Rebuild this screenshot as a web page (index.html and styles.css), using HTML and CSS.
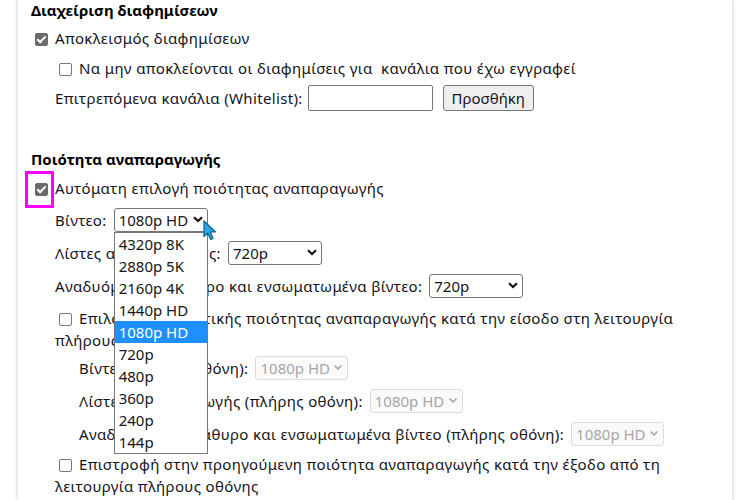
FILE: index.html
```html
<!DOCTYPE html>
<html lang="el">
<head>
    <meta charset="UTF-8">
    <meta name="viewport" content="width=device-width, initial-scale=1.0">
    <title>Ρυθμίσεις</title>
    <link rel="stylesheet" href="styles.css">
</head>
<body>
    <div class="panel">
        <h2 class="title">Διαχείριση διαφημίσεων</h2>
        <div class="line">
            <label><input type="checkbox" checked>Αποκλεισμός διαφημίσεων</label>
        </div>
        <div class="line sub">
            <label><input type="checkbox">Να μην αποκλείονται οι διαφημίσεις για&nbsp; κανάλια που έχω εγγραφεί</label>
        </div>
        <div class="line sub">
            <span>Επιτρεπόμενα κανάλια (Whitelist):</span>
            <input type="text" class="text-input">
            <button class="btn">Προσθήκη</button>
        </div>

        <h2 class="title second">Ποιότητα αναπαραγωγής</h2>
        <div class="line tight marked">
            <label><input type="checkbox" checked>Αυτόματη επιλογή ποιότητας αναπαραγωγής</label>
            <span class="mark"></span>
        </div>
        <div class="field">
            <span>Βίντεο:</span>
            <span class="sel">
                <select><option>1080p HD</option></select>
                <svg class="chev" width="10" height="7" viewBox="0 0 10 7"><path d="M1 1.2 5 5 9 1.2" fill="none" stroke="#111" stroke-width="2.2"/></svg>
                <div class="menu">
                    <div>4320p 8K</div>
                    <div>2880p 5K</div>
                    <div>2160p 4K</div>
                    <div>1440p HD</div>
                    <div class="on">1080p HD</div>
                    <div>720p</div>
                    <div>480p</div>
                    <div>360p</div>
                    <div>240p</div>
                    <div>144p</div>
                </div>
                <svg class="cursor" width="15" height="21" viewBox="0 0 15 21"><path d="M1 1 1 16.5 4.8 13 7.6 19.5 10 18.4 7.3 12 12.5 12Z" fill="#2aa8e6" stroke="#0b5f93" stroke-width="1.2" stroke-linejoin="round"/></svg>
            </span>
        </div>
        <div class="field">
            <span>Λίστες αναπαραγωγής:</span>
            <span class="sel">
                <select><option>720p</option></select>
                <svg class="chev" width="10" height="7" viewBox="0 0 10 7"><path d="M1 1.2 5 5 9 1.2" fill="none" stroke="#111" stroke-width="2.2"/></svg>
            </span>
        </div>
        <div class="field">
            <span>Αναδυόμενο παράθυρο και ενσωματωμένα βίντεο:</span>
            <span class="sel">
                <select><option>720p</option></select>
                <svg class="chev" width="10" height="7" viewBox="0 0 10 7"><path d="M1 1.2 5 5 9 1.2" fill="none" stroke="#111" stroke-width="2.2"/></svg>
            </span>
        </div>
        <div class="wrap">
            <label><input type="checkbox">Επιλογή διαφορετικής ποιότητας αναπαραγωγής κατά την είσοδο στη λειτουργία πλήρους οθόνης</label>
        </div>
        <div class="field deep">
            <span>Βίντεο (πλήρης οθόνη):</span>
            <span class="sel off">
                <select disabled><option>1080p HD</option></select>
                <svg class="chev" width="10" height="7" viewBox="0 0 10 7"><path d="M1.5 1.5 5 4.8 8.5 1.5" fill="none" stroke="#a6a6a6" stroke-width="1.6"/></svg>
            </span>
        </div>
        <div class="field deep">
            <span>Λίστες αναπαραγωγής (πλήρης οθόνη):</span>
            <span class="sel off">
                <select disabled><option>1080p HD</option></select>
                <svg class="chev" width="10" height="7" viewBox="0 0 10 7"><path d="M1.5 1.5 5 4.8 8.5 1.5" fill="none" stroke="#a6a6a6" stroke-width="1.6"/></svg>
            </span>
        </div>
        <div class="field deep">
            <span>Αναδυόμενο παράθυρο και ενσωματωμένα βίντεο (πλήρης οθόνη):</span>
            <span class="sel off">
                <select disabled><option>1080p HD</option></select>
                <svg class="chev" width="10" height="7" viewBox="0 0 10 7"><path d="M1.5 1.5 5 4.8 8.5 1.5" fill="none" stroke="#a6a6a6" stroke-width="1.6"/></svg>
            </span>
        </div>
        <div class="wrap last">
            <label><input type="checkbox">Επιστροφή στην προηγούμενη ποιότητα αναπαραγωγής κατά την έξοδο από τη λειτουργία πλήρους οθόνης</label>
        </div>
    </div>
</body>
</html>
```

FILE: styles.css
```css
body {
    margin: 0;
    font-family: "Noto Sans", "Open Sans", sans-serif;
    font-size: 15px;
    letter-spacing: 0.35px;
    color: #141420;
    background: #fff;
    overflow: hidden;
}
.panel {
    margin-left: 18px;
    width: 701px;
    padding-left: 13px;
    height: 500px;
    background: #fff;
    box-shadow: 0 0 4px rgba(0,0,0,0.28);
}
.title {
    margin: 0;
    font-size: 15px;
    font-weight: 700;
    letter-spacing: 0;
    line-height: 20px;
    color: #000;
}
.title.second {
    margin-top: 36px;
}
.line {
    height: 30px;
    display: flex;
    align-items: center;
}
.line:first-of-type {
    margin-top: 3px;
}
.line.tight {
    margin-top: 4px;
}
.sub {
    padding-left: 24px;
}
.marked {
    position: relative;
}
.mark {
    position: absolute;
    left: -6px;
    top: -2px;
    width: 23px;
    height: 31px;
    border: 3px solid #ff00ff;
}
.field {
    height: 33px;
    display: flex;
    align-items: center;
    padding-left: 24px;
}
.field.deep {
    padding-left: 48px;
}
.wrap {
    margin-top: 5px;
    padding-left: 24px;
    padding-right: 20px;
    line-height: 22px;
}
.wrap.last {
    margin-top: 3px;
}

input[type=checkbox] {
    appearance: none;
    -webkit-appearance: none;
    position: relative;
    width: 13px;
    height: 13px;
    margin: 0 7px 0 4px;
    border: 1px solid #767676;
    border-radius: 2px;
    background: #fff;
    vertical-align: -2px;
}
input[type=checkbox]:checked {
    background: #6b6b6b;
    border-color: #6b6b6b;
}
input[type=checkbox]:checked::after {
    content: "";
    position: absolute;
    left: 3px;
    top: 0px;
    width: 3px;
    height: 7px;
    border: solid #fff;
    border-width: 0 2px 2px 0;
    transform: rotate(45deg);
}

.text-input {
    width: 125px;
    height: 26px;
    box-sizing: border-box;
    margin-left: 5px;
    border: 1px solid #767676;
    border-radius: 2px;
}
.btn {
    height: 26px;
    width: 91px;
    margin-left: 10px;
    font: inherit;
    letter-spacing: 0;
    color: #141420;
    background: #efefef;
    border: 1px solid #767676;
    border-radius: 3px;
    padding: 0;
}

.sel {
    position: relative;
    display: inline-block;
    margin-left: 7px;
    height: 24px;
    letter-spacing: 0;
}
.sel select {
    appearance: none;
    -webkit-appearance: none;
    width: 94px;
    height: 24px;
    box-sizing: border-box;
    border: 1px solid #767676;
    border-radius: 3px;
    padding: 0 0 0 4px;
    font: inherit;
    color: #141420;
    background: #fff;
}
.sel.off select {
    width: 93px;
    color: #a6a6a6;
    border-color: #dcdcdc;
    background: #fafafa;
    opacity: 1;
}
.chev {
    position: absolute;
    right: 5px;
    top: 8px;
    pointer-events: none;
}
.menu {
    position: absolute;
    left: 0;
    top: 24px;
    width: 94px;
    box-sizing: border-box;
    border: 1px solid #767676;
    background: #fff;
    z-index: 5;
}
.menu div {
    height: 22px;
    line-height: 22px;
    padding-left: 4px;
}
.menu .on {
    background: #1e90ff;
    color: #fff;
}
.cursor {
    position: absolute;
    left: 89px;
    top: 12px;
    z-index: 6;
}
```
